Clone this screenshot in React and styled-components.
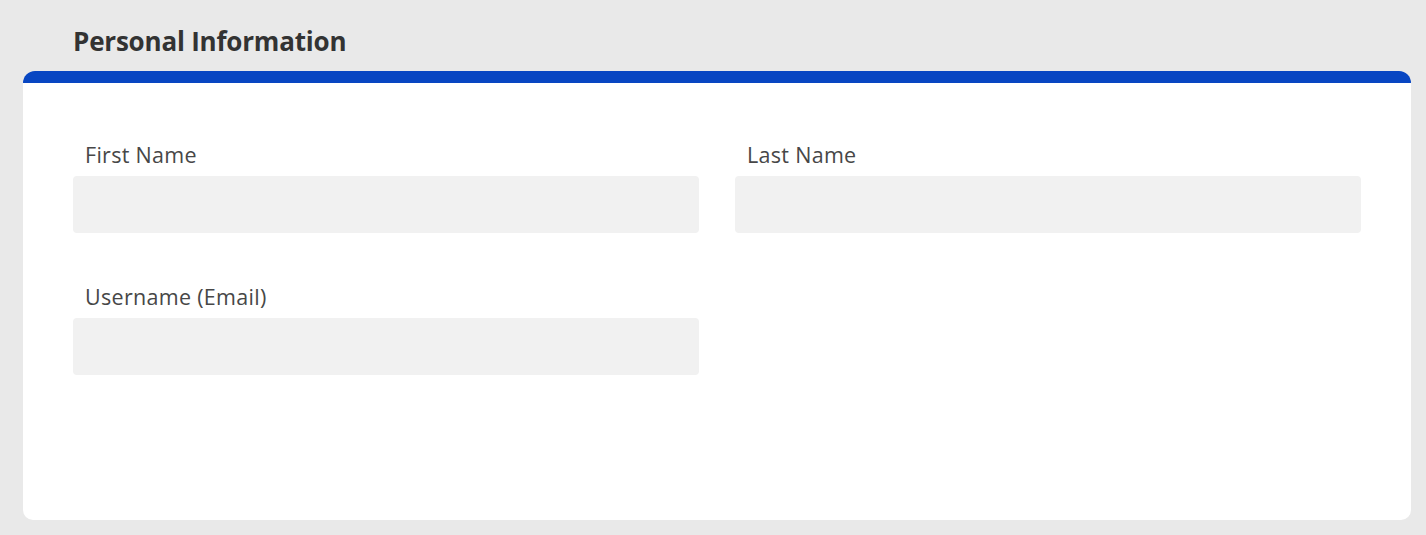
import React from 'react';
import styled, { createGlobalStyle } from 'styled-components';

const GlobalStyle = createGlobalStyle`
  html, body {
    margin: 0;
    padding: 0;
    background: #e9e9e9;
  }
  body {
    font-family: 'Open Sans', 'Noto Sans', sans-serif;
  }
`;

const fields = [
  { key: 'firstName', label: 'First Name' },
  { key: 'lastName', label: 'Last Name' },
  { key: 'username', label: 'Username (Email)' },
];

const App = () => {
  return (
    <Page>
      <GlobalStyle />
      <SectionTitle>Personal Information</SectionTitle>
      <Card>
        <FormGrid>
          {fields.map((f) => (
            <Field key={f.key}>
              <Label htmlFor={f.key}>{f.label}</Label>
              <Input id={f.key} type="text" />
            </Field>
          ))}
        </FormGrid>
      </Card>
    </Page>
  );
};

export default App;

const Page = styled.div`
  display: flex;
  flex-direction: column;
  height: 535px;
  padding: 0 15px 0 23px;
  box-sizing: border-box;
`;

const SectionTitle = styled.h2`
  margin: 0;
  height: 71px;
  padding: 23px 0 0 50px;
  box-sizing: border-box;
  color: #333333;
  font-size: 26px;
  font-weight: 700;
  line-height: 36px;
  letter-spacing: -0.2px;
`;

const Card = styled.div`
  height: 449px;
  background: #ffffff;
  border-top: 12px solid #0846c2;
  border-radius: 12px 12px 10px 10px;
  box-sizing: border-box;
  padding: 56px 50px 0;
`;

const FormGrid = styled.div`
  display: grid;
  grid-template-columns: 1fr 1fr;
  column-gap: 36px;
  row-gap: 48px;
`;

const Field = styled.div`
  display: flex;
  flex-direction: column;
`;

const Label = styled.label`
  padding-left: 12px;
  color: #474747;
  font-size: 21.5px;
  line-height: 31px;
  height: 37px;
  font-weight: 400;
  letter-spacing: 0.3px;
`;

const Input = styled.input`
  height: 57px;
  border: none;
  border-radius: 4px;
  background: #f1f1f1;
  outline: none;
  padding: 0 12px;
  font-family: inherit;
  font-size: 18px;
`;
